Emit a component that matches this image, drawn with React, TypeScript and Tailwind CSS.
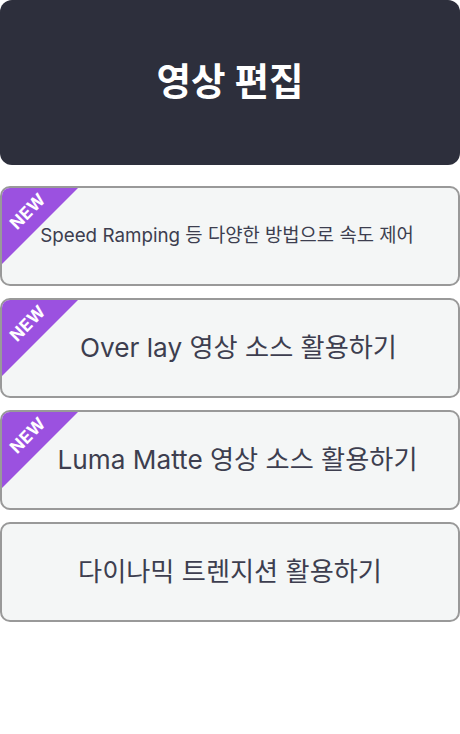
import React from "react";

const font = { fontFamily: 'Inter, "Noto Sans CJK KR", sans-serif' };

function Card({ text, isNew, small, pad }: { text: string; isNew?: boolean; small?: boolean; pad: string }) {
  return (
    <div className={"relative overflow-hidden h-[100px] rounded-[10px] border-2 border-[#999999] bg-[#f4f6f6] flex items-center justify-center " + pad}>
      {isNew && (
        <>
          <div className="absolute left-0 top-0 w-[76px] h-[76px] bg-[#9b51e0] [clip-path:polygon(0_0,100%_0,0_100%)]" />
          <span className="absolute left-[-4px] top-[15px] w-[60px] text-center -rotate-45 text-white font-bold text-[17px] leading-none tracking-[0.5px]">
            NEW
          </span>
        </>
      )}
      <span className={small ? "text-[18.8px] text-[#3d3e4f] whitespace-nowrap" : "text-[26.2px] text-[#3d3e4f] whitespace-nowrap"}>{text}</span>
    </div>
  );
}

export default function App() {
  return (
    <div className="w-[460px] h-[734px] bg-white" style={font}>
      <div className="h-[165px] rounded-xl bg-[#2d2f3c] flex items-center justify-center">
        <h1 className="text-white font-bold text-[37.5px]">영상 편집</h1>
      </div>
      <div className="mt-[21px] flex flex-col gap-[12px]">
        <Card text="Speed Ramping 등 다양한 방법으로 속도 제어" isNew small pad="pr-[6px]" />
        <Card text="Over lay 영상 소스 활용하기" isNew pad="pl-[17px]" />
        <Card text="Luma Matte 영상 소스 활용하기" isNew pad="pl-[15px]" />
        <Card text="다이나믹 트렌지션 활용하기" pad="" />
      </div>
    </div>
  );
}
